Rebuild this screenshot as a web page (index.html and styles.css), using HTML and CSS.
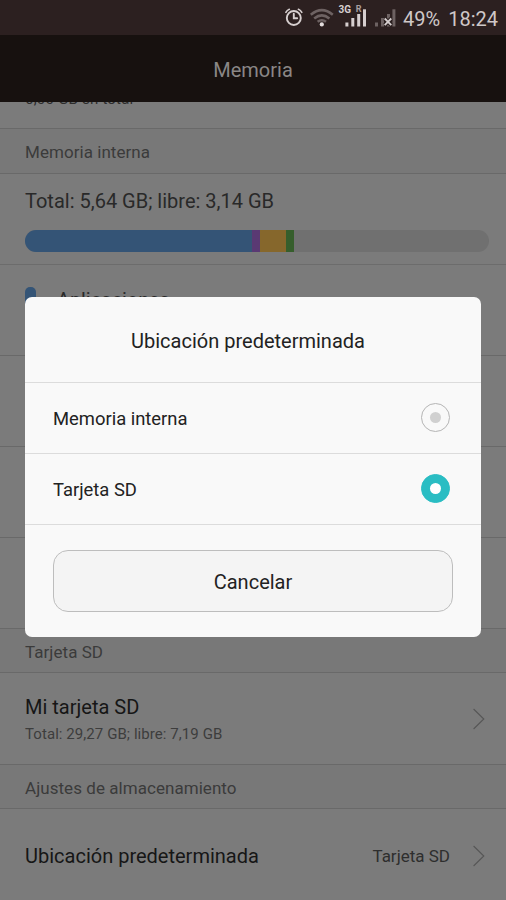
FILE: index.html
```html
<!DOCTYPE html>
<html lang="es">
<head>
<meta charset="utf-8">
<title>Memoria</title>
<link rel="stylesheet" href="styles.css">
</head>
<body>
<div class="screen">
  <div class="status">
    <svg class="status-icons" width="130" height="35" viewBox="0 0 130 35">
      <g fill="none" stroke="#d6cfcf" stroke-width="1.9" stroke-linecap="round">
        <circle cx="17.8" cy="18" r="7"/>
        <path d="M17.8 13.8V18.2H21.2"/>
        <path d="M9.9 12.4Q11 10.2 13.3 9.3M22.4 9.3Q24.7 10.2 25.8 12.4" stroke-width="1.6"/>
      </g>
      <g fill="none" stroke="#6d6262" stroke-width="2.5">
        <path d="M34.8 14.8Q45.8 5.4 56.8 14.8"/>
        <path d="M38.2 18.5Q45.8 12.2 53.4 18.5"/>
        <path d="M41.6 21.8Q45.8 18.6 50 21.8"/>
      </g>
      <circle cx="45.8" cy="24.4" r="2.1" fill="#e3dddd"/>
      <text class="net" x="62.5" y="13">3G</text>
      <text class="roam" x="79.8" y="11.8">R</text>
      <g fill="#d6cfcf">
        <rect x="69.4" y="22.5" width="3" height="4"/>
        <rect x="75.3" y="18" width="3" height="8.5"/>
        <rect x="81.2" y="14" width="3" height="12.5"/>
        <rect x="87" y="9.3" width="3" height="17.2"/>
      </g>
      <g fill="#6d6262">
        <rect x="99" y="22.5" width="3" height="4"/>
        <rect x="105" y="18" width="3" height="8.5"/>
        <rect x="111" y="14" width="3" height="12.5"/>
        <rect x="116.4" y="9.3" width="3" height="17.2"/>
      </g>
      <path d="M108.7 18.5L115.3 25.1M115.3 18.5L108.7 25.1" stroke="#2b2020" stroke-width="4"/>
      <path d="M108.7 18.5L115.3 25.1M115.3 18.5L108.7 25.1" stroke="#d6cfcf" stroke-width="1.8"/>
    </svg>
    <span class="battery">49%</span>
    <span class="clock">18:24</span>
  </div>
  <header class="appbar"><span class="t-title">Memoria</span></header>
  <main>
    <div class="cut"><span>6,00 GB en total</span></div>
    <h2 class="section first"><span class="t-mi">Memoria interna</span></h2>
    <div class="usage">
      <span class="t-total">Total: 5,64 GB; libre: 3,14 GB</span>
      <div class="bar"><i class="apps"></i><i class="images"></i><i class="audio"></i><i class="other"></i></div>
    </div>
    <div class="category"><i class="chip"></i><span class="t-apps">Aplicaciones</span></div>
    <div class="category"></div>
    <div class="category"></div>
    <div class="category"></div>
    <h2 class="section"><span class="t-sd">Tarjeta SD</span></h2>
    <div class="row card">
      <div class="labels"><span class="t-mysd">Mi tarjeta SD</span><small>Total: 29,27 GB; libre: 7,19 GB</small></div>
      <svg class="chevron" width="12" height="22" viewBox="0 0 12 22"><path d="M.6 1L10.8 11L.6 21"/></svg>
    </div>
    <h2 class="section"><span class="t-set">Ajustes de almacenamiento</span></h2>
    <div class="row location">
      <span class="t-loc grow">Ubicación predeterminada</span>
      <span class="t-sd value">Tarjeta SD</span>
      <svg class="chevron" width="12" height="22" viewBox="0 0 12 22"><path d="M.6 1L10.8 11L.6 21"/></svg>
    </div>
  </main>
  <div class="dialog" role="dialog">
    <div class="dialog-title"><span>Ubicación predeterminada</span></div>
    <div class="option"><span class="t-opt1">Memoria interna</span><i class="radio"></i></div>
    <div class="option"><span class="t-opt2">Tarjeta SD</span><i class="radio on"></i></div>
    <div class="actions"><button>Cancelar</button></div>
  </div>
</div>
</body>
</html>
```
FILE: styles.css
```css
* { box-sizing: border-box; }
body { margin: 0; font-family: Roboto, "Liberation Sans", sans-serif; }
.screen { position: relative; width: 506px; height: 900px; overflow: hidden; background: #7b7b7b; color: #161616; display: flex; flex-direction: column; }
.status { height: 35px; flex: none; background: #2c2020; color: #cfc8c8; display: flex; align-items: center; justify-content: flex-end; padding: 2px 8px 0 0; font-size: 20px; }
.status-icons { margin: -2px -3px 0 0; flex: none; }
.battery { margin-right: 8px; }
.net { font-size: 10px; font-weight: 700; fill: #d6cfcf; }
.roam { font-size: 9px; font-weight: 700; fill: #a89f9f; }
.appbar { height: 67px; flex: none; background: #17110f; color: #8a8786; display: flex; align-items: center; justify-content: center; padding-top: 2px; font-size: 20px; }
main { flex: 1; overflow: hidden; }
.cut { display: flow-root; height: 26px; font-size: 15px; color: #2d2d2d; padding-left: 25px; }
.cut span { display: block; line-height: 18px; margin-top: -12px; letter-spacing: .2px; }
.section { margin: 0; height: 44px; border-bottom: 1px solid #696969; background: #787878; display: flex; align-items: center; padding: 2px 25px 0; font-size: 17px; letter-spacing: .05px; font-weight: 400; color: #3b3b3b; }
.section.first { height: 46px; border-top: 1px solid #696969; }
.usage { height: 91px; border-bottom: 1px solid #6c6c6c; padding: 14px 17px 0 25px; font-size: 20px; line-height: 26px; color: #292929; }
.bar { margin-top: 16px; height: 22px; border-radius: 11px; overflow: hidden; background: #707070; display: flex; }
.bar i { height: 100%; }
.apps { width: 227px; background: #345476; }
.images { width: 8px; background: #5a3973; }
.audio { width: 26px; background: #86672c; }
.other { width: 8px; background: #365e2c; }
.category { height: 91px; border-bottom: 1px solid #696969; display: flex; align-items: flex-start; padding: 22px 25px 0; font-size: 19.8px; }
.t-apps { margin-top: 2px; color: #292929; }
.chip { width: 11px; height: 24px; border-radius: 5px; background: #345476; margin-right: 21px; }
.row { height: 92px; display: flex; align-items: center; padding: 0 21px 0 25px; font-size: 20px; border-bottom: 1px solid #696969; }
.labels { flex: 1; display: flex; flex-direction: column; line-height: 27px; padding-top: 4px; }
.labels small { font-size: 15px; letter-spacing: .07px; color: #3d3d3d; }
.location { padding-top: 2px; }
.grow { flex: 1; }
.value { font-size: 17px; color: #2e2e2e; margin-right: 23px; }
.chevron { flex: none; fill: none; stroke: #565656; stroke-width: 1.1; }
.dialog { position: absolute; left: 25px; top: 297px; width: 456px; height: 340px; border-radius: 7px; background: #f9f9f9; color: #222; overflow: hidden; }
.dialog-title { height: 86px; border-bottom: 1px solid #dcdcdc; display: flex; align-items: center; justify-content: center; padding: 2px 10px 0 0; font-size: 20px; }
.option { height: 71px; border-bottom: 1px solid #dcdcdc; display: flex; align-items: center; justify-content: space-between; padding: 0 31px 0 28px; font-size: 18.4px; }
.radio { width: 29px; height: 29px; margin-top: -1px; border: 1px solid #b5b5b5; border-radius: 50%; display: flex; align-items: center; justify-content: center; }
.radio::after { content: ""; width: 11px; height: 11px; border-radius: 50%; background: #d0d0d0; }
.radio.on { background: #2abdc3; border-color: #2abdc3; }
.radio.on::after { background: #fff; }
.actions { padding: 25px 28px; }
button { display: block; width: 400px; height: 62px; border: 1px solid #bdbdbd; border-radius: 15px; background: #f4f4f4; color: #222; font: 20px Roboto, "Liberation Sans", sans-serif; padding: 1px 0 0; }
```
